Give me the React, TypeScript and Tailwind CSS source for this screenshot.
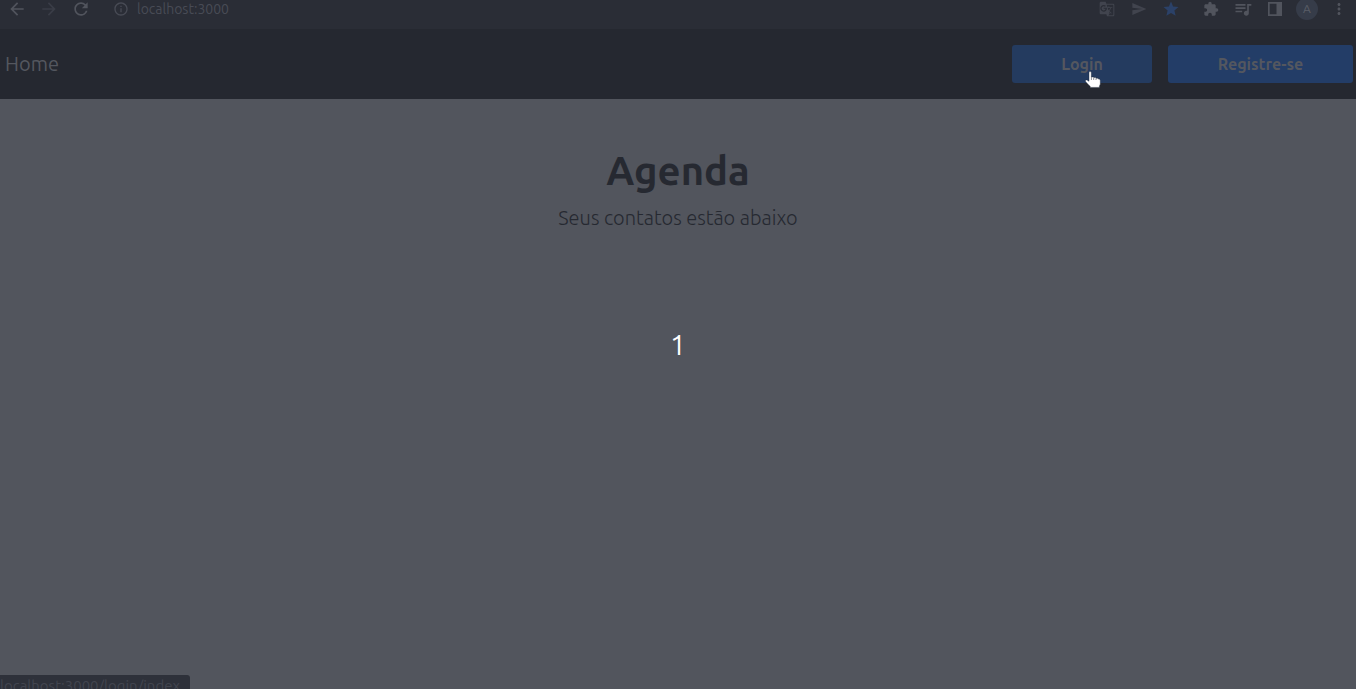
import type { ReactNode } from "react";
import {
  MdArrowBack,
  MdArrowForward,
  MdExtension,
  MdGTranslate,
  MdInfoOutline,
  MdMoreVert,
  MdQueueMusic,
  MdRefresh,
  MdSend,
  MdStar,
} from "react-icons/md";

function IconButton({ label, children }: { label: string; children: ReactNode }) {
  return (
    <button type="button" aria-label={label} className="flex size-8 items-center justify-center">
      {children}
    </button>
  );
}

function SidePanelIcon() {
  return (
    <svg viewBox="0 0 14 14" className="size-3.5" fill="currentColor" aria-hidden="true">
      <path fillRule="evenodd" d="M0 0h14v14H0zM1.7 1.7v10.6H8.5V1.7z" />
    </svg>
  );
}

function BrowserBar() {
  return (
    <header className="flex h-[29px] items-start justify-between overflow-hidden bg-[#2a2d36] px-px text-[#51545d]">
      <div className="-mt-[7px] flex items-center">
        <IconButton label="Voltar">
          <MdArrowBack className="size-5" />
        </IconButton>
        <span className="text-[#3a3d47]">
          <IconButton label="Avançar">
            <MdArrowForward className="size-5" />
          </IconButton>
        </span>
        <IconButton label="Recarregar">
          <MdRefresh className="size-5" />
        </IconButton>
        <label className="ml-4 flex items-center gap-2 text-[#484b55]">
          <MdInfoOutline className="size-4" aria-hidden="true" />
          <input
            aria-label="Endereço"
            defaultValue="localhost:3000"
            className="w-60 bg-transparent text-sm outline-none"
          />
        </label>
      </div>
      <div className="-mt-[7px] flex items-center">
        <span className="flex text-[#41444e]">
          <IconButton label="Traduzir">
            <MdGTranslate className="size-4" />
          </IconButton>
          <IconButton label="Compartilhar">
            <MdSend className="size-4" />
          </IconButton>
        </span>
        <span className="mr-2 text-[#2b4168]">
          <IconButton label="Favorito">
            <MdStar className="size-[18px]" />
          </IconButton>
        </span>
        <IconButton label="Extensões">
          <MdExtension className="size-4" />
        </IconButton>
        <IconButton label="Mídia">
          <MdQueueMusic className="size-5" />
        </IconButton>
        <IconButton label="Painel lateral">
          <SidePanelIcon />
        </IconButton>
        <IconButton label="Perfil">
          <span className="flex size-[22px] items-center justify-center rounded-full bg-[#363c49] text-xs text-[#5a5e67]">
            A
          </span>
        </IconButton>
        <IconButton label="Menu">
          <MdMoreVert className="size-[18px]" />
        </IconButton>
      </div>
    </header>
  );
}

function HandPointer() {
  return (
    <svg viewBox="0 0 16 18" className="absolute left-[73px] top-[26px] h-[18px] w-4" aria-hidden="true">
      <path
        d="M4 1.6c0-1.4 2.3-1.4 2.3 0V6h2.4v.6H11v.7h2.3v.8c1.4-.1 2 .5 2 1.5v3.3c0 1-.9 1.3-.9 2.6v.9H5.2v-1.1C3.7 14 1.8 12.5.6 10.6c-.8-1.3.4-2.2 1.7-1.4L4 10.3z"
        fill="#fff"
        stroke="#1d2638"
        strokeWidth="0.4"
      />
      <path d="M6.4 6v3M8.7 6.8V9M11 7.6V9" stroke="#59606c" strokeWidth="0.7" />
    </svg>
  );
}

export default function App() {
  return (
    <div className="relative flex min-h-screen flex-col overflow-hidden bg-[#52555d] font-['Ubuntu','Noto_Sans',sans-serif]">
      <BrowserBar />
      <nav className="flex items-center justify-between bg-[#252830] py-4 pl-[5px] pr-[3px] text-[#54575f]">
        <a href="#home" className="text-xl leading-7">
          Home
        </a>
        <div className="flex gap-4">
          <div className="relative">
            <button
              type="button"
              className="h-[38px] w-[140px] rounded-[3px] bg-[#243b5f] text-base font-bold"
            >
              Login
            </button>
            <HandPointer />
          </div>
          <button
            type="button"
            className="h-[38px] w-[185px] rounded-[3px] bg-[#233d67] text-base font-bold"
          >
            Registre-se
          </button>
        </div>
      </nav>
      <main className="flex flex-1 flex-col items-center pt-12 text-center text-[#262931]">
        <h1 className="text-[40px] font-semibold leading-12">Agenda</h1>
        <p className="mt-2 text-xl font-light leading-[30px]">Seus contatos estão abaixo</p>
      </main>
      <div className="pointer-events-none absolute inset-0 flex items-center justify-center text-[28px] leading-8 text-white">
        1
      </div>
      <div className="absolute bottom-0 left-0 h-3.5 w-[190px] overflow-hidden rounded-tr-[3px] bg-[#2e313a] text-[15px] leading-[22px] text-[#42454f]">
        localhost:3000/login/index
      </div>
    </div>
  );
}
